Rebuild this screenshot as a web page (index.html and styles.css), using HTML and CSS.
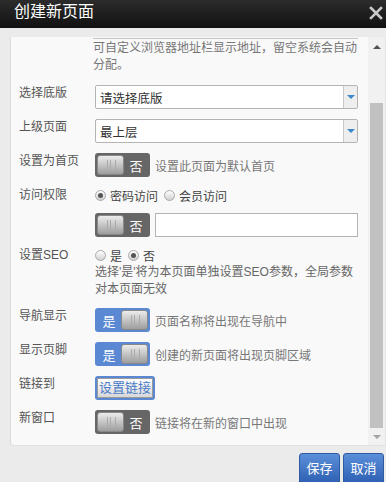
FILE: index.html
```html
<!DOCTYPE html>
<html lang="zh-CN">
<head>
    <meta charset="UTF-8">
    <meta name="viewport" content="width=device-width, initial-scale=1.0">
    <title>创建新页面</title>
    <link rel="stylesheet" href="styles.css">
</head>
<body>
    <div class="dialog">
        <div class="dialog-head">
            <h1>创建新页面</h1>
            <svg class="close" width="14" height="14" viewBox="0 0 14 14">
                <path d="M2 2 L12 12 M12 2 L2 12" stroke="#c8c8c8" stroke-width="2.6" stroke-linecap="square"/>
            </svg>
        </div>

        <div class="dialog-body">
            <div class="panel">
                <div class="form">
                    <div class="row row-first">
                        <span class="label"></span>
                        <div class="ctrl">
                            <div class="cut-line"></div>
                            <p class="hint">可自定义浏览器地址栏显示地址，留空系统会自动分配。</p>
                        </div>
                    </div>

                    <div class="row">
                        <span class="label">选择底版</span>
                        <div class="select"><span>请选择底版</span><i class="caret"></i></div>
                    </div>

                    <div class="row">
                        <span class="label">上级页面</span>
                        <div class="select"><span>最上层</span><i class="caret"></i></div>
                    </div>

                    <div class="row">
                        <span class="label">设置为首页</span>
                        <div class="inline">
                            <div class="switch off"><span class="knob"></span><span class="txt">否</span></div>
                            <span class="desc">设置此页面为默认首页</span>
                        </div>
                    </div>

                    <div class="row">
                        <span class="label">访问权限</span>
                        <div class="ctrl">
                            <div class="radios">
                                <label class="radio checked"><i></i>密码访问</label>
                                <label class="radio"><i></i>会员访问</label>
                            </div>
                        </div>
                    </div>

                    <div class="row">
                        <span class="label"></span>
                        <div class="inline">
                            <div class="switch off"><span class="knob"></span><span class="txt">否</span></div>
                            <input type="text" class="text-input">
                        </div>
                    </div>

                    <div class="row">
                        <span class="label">设置SEO</span>
                        <div class="ctrl">
                            <div class="radios">
                                <label class="radio"><i></i>是</label>
                                <label class="radio checked"><i></i>否</label>
                            </div>
                            <p class="seo-note">选择'是'将为本页面单独设置SEO参数，全局参数对本页面无效</p>
                        </div>
                    </div>

                    <div class="row">
                        <span class="label">导航显示</span>
                        <div class="inline">
                            <div class="switch on"><span class="txt">是</span><span class="knob"></span></div>
                            <span class="desc">页面名称将出现在导航中</span>
                        </div>
                    </div>

                    <div class="row">
                        <span class="label">显示页脚</span>
                        <div class="inline">
                            <div class="switch on"><span class="txt">是</span><span class="knob"></span></div>
                            <span class="desc">创建的新页面将出现页脚区域</span>
                        </div>
                    </div>

                    <div class="row">
                        <span class="label">链接到</span>
                        <div class="inline">
                            <button type="button" class="link-btn"><span>设置链接</span></button>
                        </div>
                    </div>

                    <div class="row">
                        <span class="label">新窗口</span>
                        <div class="inline">
                            <div class="switch off"><span class="knob"></span><span class="txt">否</span></div>
                            <span class="desc">链接将在新的窗口中出现</span>
                        </div>
                    </div>
                </div>

                <div class="scrollbar">
                    <div class="sb-top"><i class="arrow-up"></i></div>
                    <div class="sb-thumb"></div>
                    <div class="sb-bottom"><i class="arrow-down"></i></div>
                </div>
            </div>
        </div>

        <div class="dialog-foot">
            <button type="button" class="btn">保存</button>
            <button type="button" class="btn">取消</button>
        </div>
    </div>
</body>
</html>
```

FILE: styles.css
```css
* { box-sizing: border-box; }
body { margin: 0; background: #ebebeb; font-family: Arial, "Liberation Sans", "Noto Sans CJK SC", sans-serif; font-size: 12px; color: #555; height: 482px; overflow: hidden; }

.dialog-head { height: 28px; background: linear-gradient(#2c2c2c, #111); display: flex; align-items: center; justify-content: space-between; padding: 0 2px 0 14px; }
.dialog-head h1 { margin: 0; font-size: 16px; font-weight: normal; color: #fff; line-height: 20px; margin-top: -4px; }
.close { margin-top: -3px; margin-right: 1px; }

.dialog-body { padding: 9px 0 0 10px; }
.panel { height: 409px; display: flex; background: #f9f9f9; border-left: 1px solid #dadada; border-bottom: 1px solid #e2e2e2; border-bottom-left-radius: 4px; overflow: hidden; }
.form { flex: 1; padding: 1px 10px 0 8px; }

.row { display: grid; grid-template-columns: 76px 1fr; margin-bottom: 10px; }
.row-first { margin-bottom: 11px; }
.label { line-height: 16px; color: #555; }
.ctrl { min-width: 0; }
.cut-line { height: 1px; background: #c4c4c4; margin: 0 0 1px -2px; }
.hint { margin: 0 -6px 0 -2px; line-height: 17px; color: #777; }

.select { height: 24px; border: 1px solid #b4b4b4; border-radius: 2px; background: #fff; display: flex; align-items: center; color: #333; font-size: 12.5px; }
.select span { flex: 1; padding-left: 4px; }
.caret { width: 14px; height: 100%; border-left: 1px solid #c8c8c8; background: #eeeeee; position: relative; }
.caret::after { content: ""; position: absolute; left: 3px; top: 9px; border-left: 4px solid transparent; border-right: 4px solid transparent; border-top: 4px solid #3b87c9; }

.inline { display: flex; align-items: center; }
.desc { margin-left: 5px; color: #777; }

.switch { width: 55px; height: 24px; border-radius: 3px; display: flex; align-items: center; padding: 2px; color: #fff; font-size: 13px; }
.switch.off { background: #666; }
.switch.on { background: #5a88d3; }
.switch .txt { flex: 1; text-align: center; }
.knob { width: 27px; height: 20px; border-radius: 3px; background: linear-gradient(#ececec, #bdbdbd 60%, #9d9d9d); border: 1px solid #888; position: relative; }
.knob::after { content: ""; position: absolute; left: 9px; top: 4px; width: 7px; height: 10px; border-left: 1px solid #aaa; border-right: 1px solid #aaa; background: linear-gradient(90deg, transparent 2px, #aaa 2px, #aaa 3px, transparent 3px); }

.text-input { flex: 1; height: 24px; margin-left: 5px; border: 1px solid #b4b4b4; background: #fff; }

.radios { display: flex; height: 16px; align-items: center; color: #444; }
.radio { display: flex; align-items: center; margin-right: 6px; }
.radio i { width: 11px; height: 11px; border-radius: 50%; border: 1px solid #aaa; background: linear-gradient(#fff, #d0d0d0); margin-right: 4px; position: relative; }
.radio.checked i::after { content: ""; position: absolute; left: 2px; top: 2px; width: 5px; height: 5px; border-radius: 50%; background: #555; }
.seo-note { margin: 1px 0 0; line-height: 17px; color: #666; }

.link-btn { height: 24px; width: 60px; padding: 2px; border: none; border-radius: 3px; background: #5a88d3; font-family: inherit; }
.link-btn span { display: block; height: 100%; border: 1px solid #9a9a9a; background: linear-gradient(#fff, #d8d8d8); color: #4a7bc8; font-size: 13px; line-height: 18px; }

.scrollbar { width: 18px; background: #f1f1f1; display: flex; flex-direction: column; padding: 0 1px 0 1px; border-right: 1px solid #e4e4e4; }
.sb-top { height: 66px; display: flex; justify-content: center; padding-top: 8px; }
.sb-thumb { height: 325px; background: #c1c1c1; margin: 0 1px; }
.sb-bottom { flex: 1; display: flex; justify-content: center; padding-top: 7px; }
.arrow-up { width: 0; height: 0; border-left: 4px solid transparent; border-right: 4px solid transparent; border-bottom: 4px solid #505050; }
.arrow-down { width: 0; height: 0; border-left: 4px solid transparent; border-right: 4px solid transparent; border-top: 4px solid #a3a3a3; }

.dialog-foot { display: flex; justify-content: flex-end; gap: 3px; padding: 7px 2px 0 0; }
.btn { width: 41px; height: 32px; border: 1px solid #2d5aa0; border-radius: 3px; background: linear-gradient(#5b8fd9, #2d5eb2); color: #fff; font-size: 13px; font-family: inherit; padding: 0 0 4px; }
```
